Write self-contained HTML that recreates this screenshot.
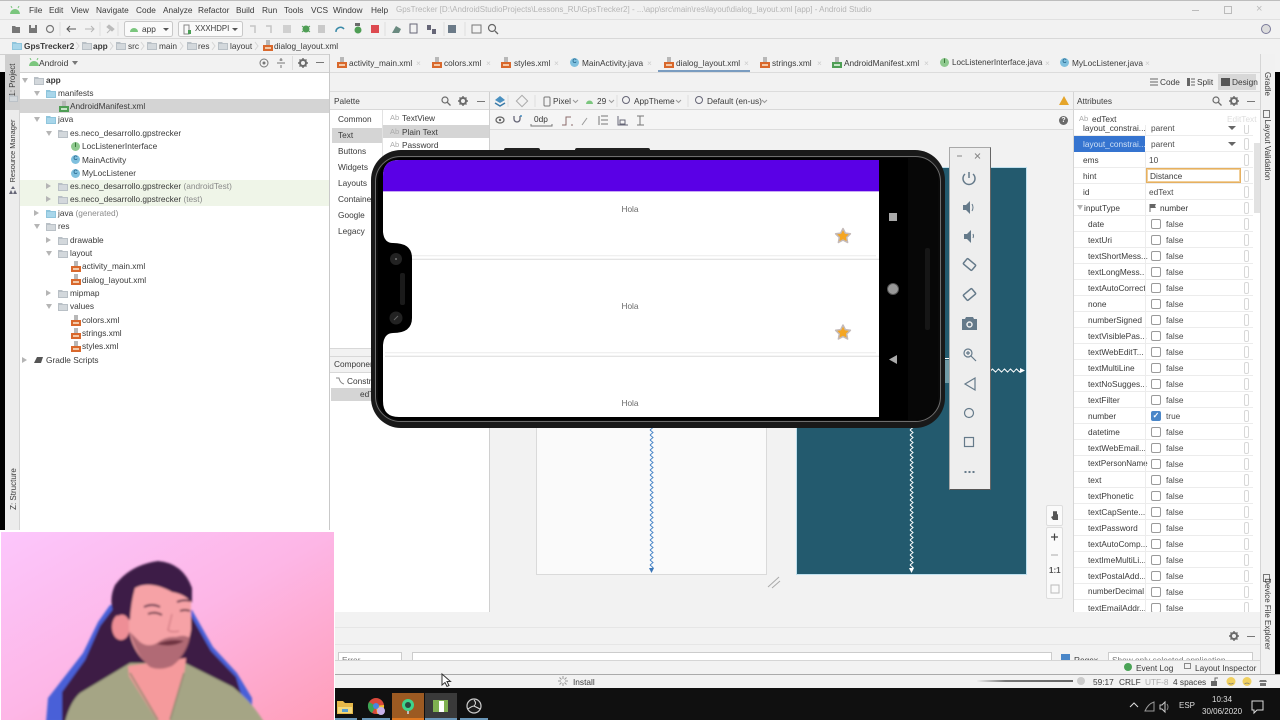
<!DOCTYPE html>
<html lang="en"><head><meta charset="utf-8"><title>GpsTrecker - Android Studio</title>
<style>
html,body{margin:0;padding:0;width:1280px;height:720px;overflow:hidden;background:#000}
#w{position:relative;width:1280px;height:720px;overflow:hidden;font:8.3px/12px "Liberation Sans",sans-serif;color:#3a3a3a;filter:blur(.3px)}
.a,.t,.s{position:absolute}
.t{white-space:nowrap}
.s{display:block;overflow:visible}
.g{color:#8a8a8a}
.c{width:9px;height:9px;border-radius:50%;background:#7fc0de;border:0 solid;position:absolute;color:#2a6a90;font:bold 6px/9px "Liberation Sans",sans-serif;text-align:center}
#at{position:absolute;left:1074px;top:125px;width:179px;height:487px;overflow:hidden}
#at div.in{margin-top:-5px}
.r{position:relative;height:15px;border-bottom:1px solid #ececec;line-height:16px;white-space:nowrap;color:#3a3a3a}
.r b{position:absolute;left:14px;top:0;font-weight:normal;width:62px;overflow:hidden}
.r b.m{left:9px}
.r u{position:absolute;left:77px;top:3px;width:8px;height:8px;border:1px solid #9a9a9a;border-radius:2px;background:#fff;text-decoration:none}
.r u.on{background:#4a86c8;border-color:#4a86c8;color:#fff;font:bold 8px/8px "Liberation Sans",sans-serif;text-align:center}
.r span{position:absolute;left:92px;top:0;color:#4a4a4a}
.r span.v{left:75px}
.r i{position:absolute;left:170px;top:2px;width:3px;height:10px;border:1px solid #d8d8d8;border-radius:2px}
.r em{position:absolute;left:71px;top:-1px;height:16px;width:1px;background:#ececec}
.arr{position:absolute;width:0;height:0;border-left:3px solid transparent;border-right:3px solid transparent;border-top:5px solid #b5b5b5}
.arr.rt{border-top:3px solid transparent;border-bottom:3px solid transparent;border-left:5px solid #b5b5b5;border-right:0}
</style></head><body><div id="w">

<svg width="0" height="0" style="position:absolute"><defs>
<symbol id="f" viewBox="0 0 10 9"><path d="M0 1h4l1 1h5v7H0z" fill="#b9c0c6"/><rect x="1" y="3" width="8" height="5" fill="#d3d8dc"/></symbol>
<symbol id="fb" viewBox="0 0 10 9"><path d="M0 1h4l1 1h5v7H0z" fill="#8fc5dc"/><rect x="1" y="3" width="8" height="5" fill="#a8d6ea"/></symbol>
<symbol id="x" viewBox="0 0 10 11"><path d="M3 0h4v5H3z" fill="#b8b8b8"/><rect x="0" y="5" width="10" height="6" fill="#d9682c"/><rect x="2" y="7" width="6" height="2" fill="#f3c9a8"/></symbol>
<symbol id="m" viewBox="0 0 10 11"><path d="M3 0h4v5H3z" fill="#b8b8b8"/><rect x="0" y="5" width="10" height="6" fill="#4f9e55"/><rect x="2" y="7" width="6" height="2" fill="#c7e4c8"/></symbol>
<symbol id="gear" viewBox="0 0 10 10"><circle cx="5" cy="5" r="3" fill="none" stroke="#6b6b6b" stroke-width="2"/><path d="M5 0v2M5 8v2M0 5h2M8 5h2M1.500 1.500l1.400 1.400M7.100 7.100l1.400 1.400M8.500 1.500L7.100 2.900M2.900 7.100L1.500 8.500" stroke="#6b6b6b" stroke-width="1.400"/></symbol>
<symbol id="mag" viewBox="0 0 10 10"><circle cx="4" cy="4" r="3" fill="none" stroke="#6b6b6b" stroke-width="1.200"/><path d="M6.300 6.300L9.500 9.500" stroke="#6b6b6b" stroke-width="1.300"/></symbol>
<symbol id="andr" viewBox="0 0 12 8"><path d="M1 8a5 5 0 0 1 10 0z" fill="#7bc67e"/><path d="M3 2L2 0M9 2l1-2" stroke="#7bc67e"/></symbol>
<pattern id="zw" width="6" height="5" patternUnits="userSpaceOnUse"><path d="M0 2.500L1.500 1 4.500 4 6 2.500" fill="none" stroke="#fff" stroke-width="1"/></pattern>
<pattern id="zb" width="5" height="5" patternUnits="userSpaceOnUse"><path d="M1 0L4 2.500 1 5" fill="none" stroke="#4a86c8" stroke-width="1"/></pattern>
<pattern id="zv" width="5" height="5" patternUnits="userSpaceOnUse"><path d="M1 0L4 2.500 1 5" fill="none" stroke="#fff" stroke-width="1"/></pattern>
</defs></svg>

<!-- base IDE chrome -->
<div class="a" style="left:0;top:0;width:1280px;height:19px;background:#f1f1f1"></div>
<div class="a" style="left:0;top:0;width:1280px;height:1px;background:#bdbdbd"></div>
<div class="a" style="left:0;top:19px;width:1280px;height:19px;background:#f2f2f2;border-top:1px solid #e0e0e0;box-sizing:border-box"></div>
<div class="a" style="left:0;top:38px;width:1280px;height:16px;background:#f2f2f2;border-top:1px solid #d8d8d8;box-sizing:border-box"></div>
<div class="a" style="left:0;top:54px;width:1275px;height:18px;background:#f2f2f2;border-top:1px solid #d0d0d0;box-sizing:border-box"></div>
<div class="a" style="left:0;top:72px;width:5px;height:460px;background:#000"></div>
<div class="a" style="left:1275px;top:72px;width:5px;height:616px;background:#000"></div>
<div class="a" style="left:1275px;top:54px;width:5px;height:18px;background:#f2f2f2"></div>

<!-- title -->
<svg class="s" style="left:9px;top:6px" width="12" height="8"><use href="#andr"/></svg>
<div class="t" style="left:29px;top:4px">File</div><div class="t" style="left:49px;top:4px">Edit</div><div class="t" style="left:71px;top:4px">View</div><div class="t" style="left:96px;top:4px">Navigate</div><div class="t" style="left:136px;top:4px">Code</div><div class="t" style="left:163px;top:4px">Analyze</div><div class="t" style="left:198px;top:4px">Refactor</div><div class="t" style="left:236px;top:4px">Build</div><div class="t" style="left:262px;top:4px">Run</div><div class="t" style="left:284px;top:4px">Tools</div><div class="t" style="left:311px;top:4px">VCS</div><div class="t" style="left:333px;top:4px">Window</div><div class="t" style="left:371px;top:4px">Help</div>
<div class="t" style="left:396px;top:4px;color:#b5b5b5;font-size:8px">GpsTrecker [D:\AndroidStudioProjects\Lessons_RU\GpsTrecker2] - ...\app\src\main\res\layout\dialog_layout.xml [app] - Android Studio</div>
<div class="a" style="left:1192px;top:10px;width:7px;height:1px;background:#bbb"></div>
<div class="a" style="left:1224px;top:6px;width:6px;height:6px;border:1px solid #bbb"></div>
<div class="t" style="left:1256px;top:3px;color:#bbb;font-size:11px">×</div>

<!-- toolbar -->
<svg class="s" style="left:0;top:19px" width="510" height="19">
<path d="M12 7h3l1 1h4v6h-8z" fill="#777"/>
<rect x="29" y="6" width="8" height="8" fill="#777"/><rect x="31" y="6" width="4" height="3" fill="#eee"/>
<circle cx="50" cy="10" r="3.500" fill="none" stroke="#777" stroke-width="1.200"/>
<path d="M67 10h9M70 7l-3 3 3 3" fill="none" stroke="#555"/><path d="M85 10h9M91 7l3 3-3 3" fill="none" stroke="#b5b5b5"/>
<path d="M107 14l5-5M109 6l5 4-2 2-5-4z" stroke="#bbb" fill="#bbb"/>
<path d="M60 3v14M100 3v14M118 3v14" stroke="#ddd"/>
<rect x="124.500" y="2.500" width="48" height="15" rx="2" fill="#fafafa" stroke="#c8c8c8"/>
<rect x="178.500" y="2.500" width="64" height="15" rx="2" fill="#fafafa" stroke="#c8c8c8"/>
<path d="M130 13a4 4 0 0 1 8 0z" fill="#7bc67e"/><path d="M163 9h6l-3 3z" fill="#555"/><path d="M232 9h6l-3 3z" fill="#555"/>
<rect x="184" y="6" width="5" height="9" fill="none" stroke="#888"/><rect x="188" y="11" width="3" height="4" fill="#4a9e55"/>
<path d="M250 7h5v7M266 7h5v7" fill="none" stroke="#c5c5c5" stroke-width="1.500"/><rect x="283" y="6" width="8" height="8" fill="#d0d0d0"/>
<circle cx="306" cy="10" r="3.500" fill="#4f9e55"/><path d="M302 7l8 6M310 7l-8 6" stroke="#4f9e55"/>
<rect x="318" y="6" width="7" height="8" fill="#c9c9c9"/>
<path d="M336 13a4.500 4.500 0 0 1 8-3" fill="none" stroke="#3a8aa8" stroke-width="1.500"/>
<circle cx="358" cy="11" r="3.500" fill="#4f9e55"/><rect x="355" y="4" width="5" height="3" fill="#6b6b6b"/>
<rect x="371" y="6" width="8" height="8" fill="#dd4a50"/>
<path d="M385 3v14M444 3v14M465 3v14" stroke="#ddd"/>
<path d="M392 14l4-7 5 3-2 4z" fill="#6a8a80"/><rect x="410" y="5" width="7" height="9" fill="none" stroke="#667"/><path d="M427 6h4v5h-4zM432 10h4v5h-4z" fill="#667"/>
<rect x="448" y="6" width="8" height="8" fill="#6b7a88"/>
<rect x="472" y="6" width="9" height="8" fill="none" stroke="#777"/><circle cx="492" cy="9" r="3.500" fill="none" stroke="#666" stroke-width="1.200"/><path d="M495 12l3 3" stroke="#666" stroke-width="1.300"/>
</svg>
<div class="t" style="left:142px;top:23px">app</div><div class="t" style="left:195px;top:23px;font-size:7.800px">XXXHDPI</div>
<svg class="s" style="left:1261px;top:24px" width="10" height="10"><circle cx="5" cy="5" r="4.500" fill="#ddd" stroke="#7a7a9a"/></svg>

<!-- breadcrumbs -->
<svg class="s" style="left:12px;top:41px" width="10" height="9"><use href="#fb"/></svg><div class="t" style="left:24px;top:40px;font-weight:bold">GpsTrecker2</div>
<svg class="s" style="left:82px;top:41px" width="10" height="9"><use href="#f"/></svg><div class="t" style="left:93px;top:40px;font-weight:bold">app</div>
<svg class="s" style="left:116px;top:41px" width="10" height="9"><use href="#f"/></svg><div class="t" style="left:128px;top:40px">src</div>
<svg class="s" style="left:147px;top:41px" width="10" height="9"><use href="#f"/></svg><div class="t" style="left:159px;top:40px">main</div>
<svg class="s" style="left:187px;top:41px" width="10" height="9"><use href="#f"/></svg><div class="t" style="left:198px;top:40px">res</div>
<svg class="s" style="left:218px;top:41px" width="10" height="9"><use href="#f"/></svg><div class="t" style="left:230px;top:40px">layout</div>
<svg class="s" style="left:263px;top:40px" width="10" height="11"><use href="#x"/></svg><div class="t" style="left:274px;top:40px">dialog_layout.xml</div>
<svg class="s" style="left:0;top:40px" width="270" height="12"><path d="M76 2l3 4-3 4M110 2l3 4-3 4M141 2l3 4-3 4M180 2l3 4-3 4M212 2l3 4-3 4M255 2l3 4-3 4" fill="none" stroke="#d5d5d5"/></svg>

<!-- left project panel -->
<div class="a" style="left:5px;top:54px;width:15px;height:478px;background:#ececec;border-right:1px solid #d5d5d5;box-sizing:border-box"></div>
<div class="a" style="left:5px;top:54px;width:15px;height:56px;background:#cfcfcf"></div>
<div class="t" style="left:-12px;top:74px;transform:rotate(-90deg);width:50px;text-align:center;font-size:7.800px">1: Project</div>
<svg class="s" style="left:9px;top:94px" width="9" height="8"><use href="#f"/></svg>
<div class="t" style="left:-22px;top:145px;transform:rotate(-90deg);width:70px;text-align:center;font-size:7.400px">Resource Manager</div>
<svg class="s" style="left:9px;top:186px" width="8" height="8"><path d="M4 0l2 3H2zM0 8l2-4 2 4zM4 8l2-4 2 4z" fill="#667"/></svg>
<div class="t" style="left:-9px;top:483px;transform:rotate(-90deg);width:46px;text-align:center;font-size:8px">Z: Structure</div>
<div class="a" style="left:20px;top:72px;width:310px;height:460px;background:#fff"></div>
<svg class="s" style="left:28px;top:58px" width="12" height="8"><use href="#andr"/></svg>
<div class="t" style="left:39px;top:57px;font-size:8.500px">Android</div>
<div class="a" style="left:72px;top:61px;width:0;height:0;border:3px solid transparent;border-top:4px solid #777"></div>
<svg class="s" style="left:259px;top:58px" width="10" height="10"><circle cx="5" cy="5" r="4" fill="none" stroke="#777"/><circle cx="5" cy="5" r="1.500" fill="#777"/></svg>
<svg class="s" style="left:276px;top:58px" width="10" height="10"><path d="M1 5h8M5 0v3M3.500 2h3M5 10V7" stroke="#777"/></svg>
<svg class="s" style="left:298px;top:58px" width="10" height="10"><use href="#gear"/></svg>
<div class="a" style="left:316px;top:62px;width:8px;height:1px;background:#777"></div>
<div class="a" style="left:292px;top:56px;width:1px;height:14px;background:#ddd"></div>
<div class="a" style="left:20px;top:72px;width:310px;height:1px;background:#d0d0d0"></div>
<div class="a" style="left:329px;top:54px;width:1px;height:478px;background:#c9c9c9"></div>

<div class="a" style="left:20px;top:99px;width:309px;height:14px;background:#d4d4d4"></div>
<div class="a" style="left:20px;top:180px;width:309px;height:26px;background:#eff5e8"></div>

<i class="arr" style="left:22px;top:78px"></i><svg class="s" style="left:34px;top:76px" width="10" height="9"><use href="#f"/></svg><div class="t" style="left:46px;top:74px;font-weight:bold">app</div>
<i class="arr" style="left:34px;top:91px"></i><svg class="s" style="left:46px;top:89px" width="10" height="9"><use href="#fb"/></svg><div class="t" style="left:58px;top:87px">manifests</div>
<svg class="s" style="left:59px;top:101px" width="10" height="11"><use href="#m"/></svg><div class="t" style="left:70px;top:100px">AndroidManifest.xml</div>
<i class="arr" style="left:34px;top:117px"></i><svg class="s" style="left:46px;top:115px" width="10" height="9"><use href="#fb"/></svg><div class="t" style="left:58px;top:113px">java</div>
<i class="arr" style="left:46px;top:131px"></i><svg class="s" style="left:58px;top:129px" width="10" height="9"><use href="#f"/></svg><div class="t" style="left:70px;top:127px">es.neco_desarrollo.gpstrecker</div>
<div class="c" style="left:71px;top:142px;background:#8fc98f;color:#2c6a2c">I</div><div class="t" style="left:82px;top:140px">LocListenerInterface</div>
<div class="c" style="left:71px;top:155px">C</div><div class="t" style="left:82px;top:154px">MainActivity</div>
<div class="c" style="left:71px;top:169px">C</div><div class="t" style="left:82px;top:167px">MyLocListener</div>
<i class="arr rt" style="left:46px;top:183px"></i><svg class="s" style="left:58px;top:182px" width="10" height="9"><use href="#f"/></svg><div class="t" style="left:70px;top:180px">es.neco_desarrollo.gpstrecker <span class="g">(androidTest)</span></div>
<i class="arr rt" style="left:46px;top:196px"></i><svg class="s" style="left:58px;top:195px" width="10" height="9"><use href="#f"/></svg><div class="t" style="left:70px;top:193px">es.neco_desarrollo.gpstrecker <span class="g">(test)</span></div>
<i class="arr rt" style="left:34px;top:210px"></i><svg class="s" style="left:46px;top:209px" width="10" height="9"><use href="#fb"/></svg><div class="t" style="left:58px;top:207px">java <span class="g">(generated)</span></div>
<i class="arr" style="left:34px;top:224px"></i><svg class="s" style="left:46px;top:222px" width="10" height="9"><use href="#f"/></svg><div class="t" style="left:58px;top:220px">res</div>
<i class="arr rt" style="left:46px;top:237px"></i><svg class="s" style="left:58px;top:236px" width="10" height="9"><use href="#f"/></svg><div class="t" style="left:70px;top:234px">drawable</div>
<i class="arr" style="left:46px;top:251px"></i><svg class="s" style="left:58px;top:249px" width="10" height="9"><use href="#f"/></svg><div class="t" style="left:70px;top:247px">layout</div>
<svg class="s" style="left:71px;top:261px" width="10" height="11"><use href="#x"/></svg><div class="t" style="left:82px;top:260px">activity_main.xml</div>
<svg class="s" style="left:71px;top:274px" width="10" height="11"><use href="#x"/></svg><div class="t" style="left:82px;top:274px">dialog_layout.xml</div>
<i class="arr rt" style="left:46px;top:290px"></i><svg class="s" style="left:58px;top:289px" width="10" height="9"><use href="#f"/></svg><div class="t" style="left:70px;top:287px">mipmap</div>
<i class="arr" style="left:46px;top:304px"></i><svg class="s" style="left:58px;top:302px" width="10" height="9"><use href="#f"/></svg><div class="t" style="left:70px;top:300px">values</div>
<svg class="s" style="left:71px;top:315px" width="10" height="11"><use href="#x"/></svg><div class="t" style="left:82px;top:314px">colors.xml</div>
<svg class="s" style="left:71px;top:328px" width="10" height="11"><use href="#x"/></svg><div class="t" style="left:82px;top:327px">strings.xml</div>
<svg class="s" style="left:71px;top:341px" width="10" height="11"><use href="#x"/></svg><div class="t" style="left:82px;top:340px">styles.xml</div>
<i class="arr rt" style="left:22px;top:357px"></i><svg class="s" style="left:33px;top:355px" width="11" height="9"><path d="M1 8l3-6h6l-2 6z" fill="#555"/></svg><div class="t" style="left:46px;top:354px">Gradle Scripts</div>

<!-- Editor tabs -->
<div class="a" style="left:330px;top:54px;width:930px;height:18px;background:#f2f2f2"></div>
<svg class="s" style="left:337px;top:57px" width="10" height="11"><use href="#x"/></svg><div class="t" style="left:349px;top:57px">activity_main.xml</div><div class="t g" style="left:416px;top:57px;color:#ccc">×</div>
<svg class="s" style="left:432px;top:57px" width="10" height="11"><use href="#x"/></svg><div class="t" style="left:444px;top:57px">colors.xml</div><div class="t" style="left:486px;top:57px;color:#ccc">×</div>
<svg class="s" style="left:501px;top:57px" width="10" height="11"><use href="#x"/></svg><div class="t" style="left:514px;top:57px">styles.xml</div><div class="t" style="left:554px;top:57px;color:#ccc">×</div>
<div class="c" style="left:570px;top:58px">C</div><div class="t" style="left:582px;top:57px">MainActivity.java</div><div class="t" style="left:647px;top:57px;color:#ccc">×</div>
<svg class="s" style="left:664px;top:57px" width="10" height="11"><use href="#x"/></svg><div class="t" style="left:676px;top:57px">dialog_layout.xml</div><div class="t" style="left:744px;top:57px;color:#ccc">×</div>
<div class="a" style="left:658px;top:70px;width:92px;height:2px;background:#7a9cc0"></div>
<svg class="s" style="left:760px;top:57px" width="10" height="11"><use href="#x"/></svg><div class="t" style="left:772px;top:57px">strings.xml</div><div class="t" style="left:817px;top:57px;color:#ccc">×</div>
<svg class="s" style="left:832px;top:57px" width="10" height="11"><use href="#m"/></svg><div class="t" style="left:844px;top:57px">AndroidManifest.xml</div><div class="t" style="left:924px;top:57px;color:#ccc">×</div>
<div class="c" style="left:940px;top:58px;background:#8fc98f;color:#2c6a2c">I</div><div class="t" style="left:952px;top:57px;font-size:8.100px">LocListenerInterface.java</div><div class="t" style="left:1045px;top:57px;color:#ccc">×</div>
<div class="c" style="left:1060px;top:58px">C</div><div class="t" style="left:1072px;top:57px">MyLocListener.java</div><div class="t" style="left:1145px;top:57px;color:#ccc">×</div>

<!-- right strip -->
<div class="a" style="left:1260px;top:54px;width:15px;height:634px;background:#f1f1f1;border-left:1px solid #d5d5d5;box-sizing:border-box"></div>
<div class="t" style="left:1247px;top:78px;transform:rotate(90deg);width:40px;text-align:center;font-size:8px">Gradle</div>
<div class="t" style="left:1232px;top:144px;transform:rotate(90deg);width:70px;text-align:center;font-size:8px">Layout Validation</div>
<div class="a" style="left:1263px;top:110px;width:7px;height:8px;border:1px solid #777;box-sizing:border-box"></div>
<div class="a" style="left:1263px;top:574px;width:7px;height:8px;border:1px solid #777;box-sizing:border-box"></div>
<div class="t" style="left:1231px;top:608px;transform:rotate(90deg);width:72px;text-align:center;font-size:8px">Device File Explorer</div>

<!-- mode bar -->
<div class="a" style="left:330px;top:72px;width:930px;height:20px;background:#f2f2f2;border-top:1px solid #dcdcdc;border-bottom:1px solid #dcdcdc;box-sizing:border-box"></div>
<div class="a" style="left:1218px;top:74px;width:38px;height:16px;background:#d8d8d8"></div>
<svg class="s" style="left:1149px;top:78px" width="110" height="9"><path d="M1 1h8M1 4h8M1 7h8" stroke="#666"/><path d="M38 0h3v8h-3z" fill="#666"/><path d="M42 1h4M42 4h4M42 7h4" stroke="#666"/><rect x="72" y="0" width="9" height="8" fill="#555"/></svg>
<div class="t" style="left:1160px;top:76px">Code</div><div class="t" style="left:1197px;top:76px">Split</div><div class="t" style="left:1232px;top:76px">Design</div>

<!-- palette -->
<div class="a" style="left:330px;top:92px;width:160px;height:18px;background:#f2f2f2;border-bottom:1px solid #d8d8d8;box-sizing:border-box"></div>
<div class="t" style="left:334px;top:95px">Palette</div>
<svg class="s" style="left:441px;top:96px" width="10" height="10"><use href="#mag"/></svg>
<svg class="s" style="left:458px;top:96px" width="10" height="10"><use href="#gear"/></svg>
<div class="a" style="left:477px;top:101px;width:8px;height:1px;background:#777"></div>
<div class="a" style="left:330px;top:110px;width:159px;height:238px;background:#fff"></div>
<div class="a" style="left:382px;top:110px;width:1px;height:238px;background:#e2e2e2"></div>
<div class="a" style="left:332px;top:128px;width:50px;height:15px;background:#d5d5d5"></div>
<div class="a" style="left:383px;top:125px;width:106px;height:13px;background:#d5d5d5"></div>
<div class="t" style="left:338px;top:113px">Common</div><div class="t" style="left:338px;top:129px">Text</div><div class="t" style="left:338px;top:145px">Buttons</div><div class="t" style="left:338px;top:161px">Widgets</div><div class="t" style="left:338px;top:177px">Layouts</div><div class="t" style="left:338px;top:193px">Container</div><div class="t" style="left:338px;top:209px">Google</div><div class="t" style="left:338px;top:225px">Legacy</div>
<div class="t" style="left:390px;top:112px;color:#aaa;font-size:7.500px">Ab</div><div class="t" style="left:402px;top:112px">TextView</div>
<div class="t" style="left:390px;top:126px;color:#aaa;font-size:7.500px">Ab</div><div class="t" style="left:402px;top:126px">Plain Text</div>
<div class="t" style="left:390px;top:139px;color:#aaa;font-size:7.500px">Ab</div><div class="t" style="left:402px;top:139px">Password</div>
<div class="a" style="left:330px;top:348px;width:159px;height:8px;background:#f2f2f2;border-top:1px solid #d8d8d8;box-sizing:border-box"></div>
<div class="a" style="left:330px;top:356px;width:159px;height:17px;background:#f2f2f2;border-top:1px solid #d8d8d8;border-bottom:1px solid #d8d8d8;box-sizing:border-box"></div>
<div class="t" style="left:334px;top:358px">Component Tree</div>
<div class="a" style="left:330px;top:373px;width:159px;height:239px;background:#fff"></div>
<div class="a" style="left:331px;top:388px;width:158px;height:13px;background:#d5d5d5"></div>
<div class="t" style="left:347px;top:375px">ConstraintLayout</div><div class="t" style="left:360px;top:388px">edText</div>
<svg class="s" style="left:336px;top:377px" width="8" height="8"><path d="M0 1h3q1 5 5 6" fill="none" stroke="#888"/></svg>

<!-- designer toolbars -->
<div class="a" style="left:490px;top:92px;width:583px;height:18px;background:#f2f2f2;border-bottom:1px solid #d8d8d8;box-sizing:border-box"></div>
<div class="a" style="left:490px;top:110px;width:583px;height:20px;background:#f5f5f5;border-bottom:1px solid #dcdcdc;box-sizing:border-box"></div>
<div class="a" style="left:489px;top:92px;width:1px;height:520px;background:#d0d0d0"></div>
<svg class="s" style="left:490px;top:92px" width="580" height="38">
<path d="M5 8l5-4 5 4-5 3z" fill="#4a90c0"/><path d="M5 11l5 3 5-3" stroke="#3a7aa8" fill="none" stroke-width="1.500"/>
<rect x="28" y="5" width="8" height="8" transform="rotate(45 32 9)" fill="none" stroke="#aaa"/>
<rect x="54" y="5" width="6" height="9" rx="1" fill="none" stroke="#777"/>
<path d="M96 12a3.500 3.500 0 0 1 7 0z" fill="#7bc67e"/>
<path d="M18 3v12M45 3v12M127 3v12M198 3v12" stroke="#ddd"/>
<path d="M83 8l2.500 2.500L88 8M119 8l2.500 2.500L124 8M186 8l2.500 2.500L191 8M272 8l2.500 2.500L277 8" fill="none" stroke="#999"/>
<ellipse cx="10" cy="28" rx="4" ry="3" fill="none" stroke="#666" stroke-width="1.300"/><circle cx="10" cy="28" r="1.200" fill="#666"/>
<path d="M24 24v3a3 3 0 0 0 6 0v-3" fill="none" stroke="#667" stroke-width="1.300"/><circle cx="31" cy="24" r="1" fill="#4a90c0"/>
<path d="M41 32v2h21v-2" fill="none" stroke="#777"/><path d="M72 33h4v-8h5M81 33h2" fill="none" stroke="#8a6a6a"/><path d="M92 33l5-7" stroke="#999"/><path d="M111 24h7M111 28h7M111 32h7M109 24v9" stroke="#777" fill="none"/><path d="M128 24v9h10M130 28h5v4h-5z" fill="none" stroke="#667"/><path d="M147 24h7M150 24v9M147 33h7" stroke="#777" fill="none"/>
</svg>
<div class="t" style="left:534px;top:113px;color:#333">0dp</div>
<div class="t" style="left:553px;top:95px">Pixel</div><div class="t" style="left:597px;top:95px">29</div><div class="t" style="left:634px;top:95px">AppTheme</div><div class="t" style="left:707px;top:95px">Default (en-us)</div>
<div class="a" style="left:695px;top:96px;width:8px;height:8px;border:1px solid #667;border-radius:50%;box-sizing:border-box"></div>
<div class="a" style="left:622px;top:96px;width:8px;height:8px;border:1px solid #667;border-radius:50%;box-sizing:border-box"></div>
<svg class="s" style="left:1059px;top:96px" width="10" height="9"><path d="M5 0l5 9H0z" fill="#e5a52a"/></svg>
<div class="a" style="left:1059px;top:116px;width:9px;height:9px;background:#6b6b6b;border-radius:50%;color:#fff;font:bold 7px/9px 'Liberation Sans',sans-serif;text-align:center">?</div>

<!-- canvas -->
<div class="a" style="left:490px;top:130px;width:583px;height:482px;background:#f2f2f2"></div>
<div class="a" style="left:537px;top:168px;width:229px;height:406px;background:#fafafa;box-shadow:0 0 0 1px #dadada"></div>
<div class="a" style="left:797px;top:168px;width:229px;height:406px;background:#235a6e;box-shadow:0 0 0 1px #bfe0ee"></div>
<svg class="s" style="left:649px;top:420px" width="5" height="154"><rect width="5" height="150" fill="url(#zb)"/><path d="M0 148h5l-2.500 5z" fill="#3a76b8"/></svg>
<svg class="s" style="left:909px;top:420px" width="5" height="154"><rect width="5" height="150" fill="url(#zv)"/><path d="M0 148h5l-2.500 5z" fill="#fff"/></svg>
<svg class="s" style="left:991px;top:368px" width="35" height="5"><rect width="30" height="5" fill="url(#zw)"/><path d="M29 0l5 2.500-5 2.500z" fill="#fff"/></svg>
<div class="a" style="left:945px;top:358px;width:4px;height:1px;background:#fff"></div>
<div class="a" style="left:945px;top:360px;width:4px;height:23px;background:#6f9aa6"></div>
<svg class="s" style="left:767px;top:576px" width="14" height="14"><path d="M1 11L12 1M5 12L13 5" stroke="#aaa"/></svg>
<div class="a" style="left:1046px;top:505px;width:17px;height:21px;background:#fafafa;border:1px solid #ddd;border-radius:2px;box-sizing:border-box"></div>
<div class="a" style="left:1046px;top:527px;width:17px;height:72px;background:#fafafa;border:1px solid #ddd;border-radius:2px;box-sizing:border-box"></div>
<svg class="s" style="left:1046px;top:505px" width="17" height="94"><path d="M5 12l2 3h5v-5a1 1 0 0 0-1-1V7a1 1 0 0 0-2 0 1 1 0 0 0-2 0v4z" fill="#555"/><path d="M5 32h7M8.500 28.500v7" stroke="#444" stroke-width="1.200"/><path d="M5 50h7" stroke="#aaa"/><rect x="5" y="80" width="8" height="8" fill="none" stroke="#bbb"/></svg>
<div class="t" style="left:1049px;top:565px;font-size:8px;font-weight:bold;color:#555">1:1</div>

<!-- attributes -->
<div class="a" style="left:1073px;top:92px;width:187px;height:520px;background:#fff;border-left:1px solid #d5d5d5;box-sizing:border-box"></div>
<div class="a" style="left:1074px;top:92px;width:186px;height:18px;background:#f2f2f2;border-bottom:1px solid #d8d8d8;box-sizing:border-box"></div>
<div class="t" style="left:1077px;top:95px">Attributes</div>
<svg class="s" style="left:1212px;top:96px" width="10" height="10"><use href="#mag"/></svg>
<svg class="s" style="left:1229px;top:96px" width="10" height="10"><use href="#gear"/></svg>
<div class="a" style="left:1247px;top:101px;width:8px;height:1px;background:#777"></div>
<div class="t" style="left:1079px;top:113px;color:#aaa;font-size:7.500px">Ab</div><div class="t" style="left:1092px;top:113px">edText</div><div class="t" style="left:1227px;top:113px;color:#ddd">EditText</div>
<div id="at"><div class="in">
<div class="r"><b class="m">layout_constrai...</b><em></em><span class="v" style="left:77px">parent</span><i></i></div>
<div class="r"><b class="m" style="left:0;padding-left:9px;width:62px;height:16px;background:#3574d0;color:#cfe0f5">layout_constrai...</b><span class="v" style="left:77px">parent</span><i></i></div>
<div class="r"><b class="m">ems</b><em></em><span class="v">10</span><i></i></div>
<div class="r"><b class="m">hint</b><em></em><i></i></div>
<div class="r"><b class="m">id</b><em></em><span class="v">edText</span><i></i></div>
<div class="r"><b class="m" style="left:10px">inputType</b><em></em><span class="v" style="left:86px;color:#333">number</span><i></i></div>
<div class="r"><b>date</b><em></em><u></u><span>false</span><i></i></div>
<div class="r"><b>textUri</b><em></em><u></u><span>false</span><i></i></div>
<div class="r"><b>textShortMess...</b><em></em><u></u><span>false</span><i></i></div>
<div class="r"><b>textLongMess...</b><em></em><u></u><span>false</span><i></i></div>
<div class="r"><b>textAutoCorrect</b><em></em><u></u><span>false</span><i></i></div>
<div class="r"><b>none</b><em></em><u></u><span>false</span><i></i></div>
<div class="r"><b>numberSigned</b><em></em><u></u><span>false</span><i></i></div>
<div class="r"><b>textVisiblePas...</b><em></em><u></u><span>false</span><i></i></div>
<div class="r"><b>textWebEditT...</b><em></em><u></u><span>false</span><i></i></div>
<div class="r"><b>textMultiLine</b><em></em><u></u><span>false</span><i></i></div>
<div class="r"><b>textNoSugges...</b><em></em><u></u><span>false</span><i></i></div>
<div class="r"><b>textFilter</b><em></em><u></u><span>false</span><i></i></div>
<div class="r"><b>number</b><em></em><u class="on">✓</u><span>true</span><i></i></div>
<div class="r"><b>datetime</b><em></em><u></u><span>false</span><i></i></div>
<div class="r"><b>textWebEmail...</b><em></em><u></u><span>false</span><i></i></div>
<div class="r"><b style="font-size:8px">textPersonName</b><em></em><u></u><span>false</span><i></i></div>
<div class="r"><b>text</b><em></em><u></u><span>false</span><i></i></div>
<div class="r"><b>textPhonetic</b><em></em><u></u><span>false</span><i></i></div>
<div class="r"><b>textCapSente...</b><em></em><u></u><span>false</span><i></i></div>
<div class="r"><b>textPassword</b><em></em><u></u><span>false</span><i></i></div>
<div class="r"><b>textAutoComp...</b><em></em><u></u><span>false</span><i></i></div>
<div class="r"><b>textImeMultiLi...</b><em></em><u></u><span>false</span><i></i></div>
<div class="r"><b>textPostalAdd...</b><em></em><u></u><span>false</span><i></i></div>
<div class="r"><b style="font-size:8px">numberDecimal</b><em></em><u></u><span>false</span><i></i></div>
<div class="r"><b>textEmailAddr...</b><em></em><u></u><span>false</span><i></i></div>
</div></div>
<div class="a" style="left:1228px;top:126px;width:0;height:0;border:4px solid transparent;border-top:4px solid #666"></div>
<div class="a" style="left:1228px;top:142px;width:0;height:0;border:4px solid transparent;border-top:4px solid #666"></div>
<div class="a" style="left:1146px;top:168px;width:95px;height:15px;border:1px solid #e6b060;box-shadow:inset 0 0 0 1px #f1cf99;box-sizing:border-box;background:#fff;padding-left:3px;line-height:14px">Distance</div>
<svg class="s" style="left:1148px;top:203px" width="10" height="9"><path d="M2 1v8" stroke="#666"/><path d="M2 1h6l-1 2 1 2H2z" fill="#666"/></svg>
<i class="arr" style="left:1077px;top:205px"></i>
<div class="a" style="left:1254px;top:143px;width:6px;height:70px;background:#e2e2e2"></div>

<!-- bottom panels -->
<div class="a" style="left:334px;top:612px;width:926px;height:62px;background:#f2f2f2"></div>
<div class="a" style="left:334px;top:627px;width:926px;height:1px;background:#e6e6e6"></div>
<div class="a" style="left:334px;top:644px;width:926px;height:1px;background:#e6e6e6"></div>
<svg class="s" style="left:1229px;top:631px" width="10" height="10"><use href="#gear"/></svg>
<div class="a" style="left:1247px;top:636px;width:8px;height:1px;background:#777"></div>
<div class="a" style="left:338px;top:652px;width:64px;height:8px;background:#fff;border:1px solid #ccc;border-bottom:0;box-sizing:border-box"></div>
<div class="a" style="left:412px;top:652px;width:640px;height:8px;background:#fff;border:1px solid #ccc;border-bottom:0;box-sizing:border-box"></div>
<div class="a" style="left:1061px;top:654px;width:9px;height:6px;background:#4a86c8"></div>
<div class="a" style="left:1108px;top:652px;width:145px;height:8px;background:#fff;border:1px solid #ccc;border-bottom:0;box-sizing:border-box"></div>
<div class="a" style="left:334px;top:651px;width:926px;height:9px;overflow:hidden"><div class="t" style="left:8px;top:3px;color:#777">Error</div><div class="t" style="left:740px;top:3px">Regex</div><div class="t" style="left:778px;top:3px;color:#777">Show only selected application</div></div>
<div class="a" style="left:334px;top:660px;width:926px;height:14px;background:#f2f2f2;border-top:1px solid #d5d5d5;box-sizing:border-box"></div>
<div class="a" style="left:1124px;top:663px;width:8px;height:8px;background:#4aa356;border-radius:50%"></div>
<div class="t" style="left:1136px;top:662px">Event Log</div>
<div class="t" style="left:1195px;top:662px">Layout Inspector</div>
<div class="a" style="left:1184px;top:663px;width:7px;height:6px;border:1px solid #888;box-sizing:border-box"></div>
<div class="a" style="left:334px;top:674px;width:946px;height:14px;background:#f2f2f2;border-top:1px solid #aaa;box-sizing:border-box"></div>
<svg class="s" style="left:558px;top:676px" width="10" height="10"><path d="M5 0v3M5 7v3M0 5h3M7 5h3M1.500 1.500l2 2M6.500 6.500l2 2M8.500 1.500l-2 2M3.500 6.500l-2 2" stroke="#999"/></svg>
<div class="t" style="left:573px;top:676px">Install</div>
<div class="a" style="left:977px;top:680px;width:96px;height:2px;background:linear-gradient(90deg,#eee,#777 30%,#666)"></div>
<div class="a" style="left:1077px;top:677px;width:8px;height:8px;background:#ccc;border-radius:50%"></div>
<div class="t" style="left:1093px;top:676px">59:17</div><div class="t" style="left:1119px;top:676px">CRLF</div><div class="t" style="left:1145px;top:676px;color:#aaa">UTF-8</div><div class="t" style="left:1173px;top:676px">4 spaces</div>
<svg class="s" style="left:1210px;top:676px" width="60" height="11"><rect x="1" y="5" width="6" height="5" fill="#666"/><path d="M5 5V2h3" fill="none" stroke="#666"/><circle cx="21" cy="5.500" r="4.500" fill="#f0d060"/><circle cx="37" cy="5.500" r="4.500" fill="#f0d060"/><path d="M18.500 7q2.500 2 5 0M34.500 8q2.500-2 5 0" stroke="#777" fill="none" stroke-width=".8"/><path d="M50 4h6l1 2h-8zM50 7h6v3h-6z" fill="#777"/></svg>
<svg class="s" style="left:441px;top:673px" width="10" height="15"><path d="M1 1v11l3-2.500 2 4 2-1-2-4h3.500z" fill="#fff" stroke="#333"/></svg>

<!-- taskbar -->
<div class="a" style="left:334px;top:688px;width:946px;height:32px;background:#101010"></div>
<div class="a" style="left:392px;top:693px;width:32px;height:27px;background:#9c5a22"></div>
<div class="a" style="left:425px;top:693px;width:32px;height:27px;background:#3a3a3a"></div>
<div class="a" style="left:392px;top:718px;width:32px;height:2px;background:#e07820"></div>
<div class="a" style="left:334px;top:718px;width:23px;height:2px;background:#6a96b8"></div>
<div class="a" style="left:362px;top:718px;width:28px;height:2px;background:#6a96b8"></div>
<div class="a" style="left:425px;top:718px;width:32px;height:2px;background:#6a96b8"></div>
<div class="a" style="left:460px;top:718px;width:28px;height:2px;background:#6a96b8"></div>
<svg class="s" style="left:334px;top:688px" width="160" height="32">
<path d="M3 13h6l2 2h8v11H3z" fill="#e6b84a"/><rect x="4" y="19" width="14" height="6" fill="#f4d97c"/><rect x="8" y="21" width="6" height="3" fill="#5aa0d0"/>
<circle cx="42" cy="18" r="8" fill="#d9483b"/><path d="M42 18L35 14a8 8 0 0 0 3 11z" fill="#3aa655"/><path d="M42 18l1 8a8 8 0 0 0 7-9z" fill="#f0c030"/><circle cx="42" cy="18" r="3" fill="#4a86e0"/><circle cx="47" cy="23" r="4" fill="#c8b0e8"/>
<circle cx="74" cy="17" r="6" fill="#3dd68c"/><circle cx="74" cy="17" r="3" fill="#2a4a40"/><path d="M74 23v3" stroke="#cde" stroke-width="1.500"/>
<rect x="99" y="12" width="15" height="12" fill="#7fb050"/><rect x="105" y="13" width="5" height="11" fill="#fff"/>
<circle cx="140" cy="18" r="7" fill="#1c1c1c" stroke="#ccc" stroke-width="1.200"/><path d="M140 12q3 3 0 6M134 21q4-3 6-3M146 21q-4-2-6-3" stroke="#ddd" fill="none"/>
</svg>
<svg class="s" style="left:1128px;top:698px" width="135" height="18"><path d="M2 9l4-4 4 4" fill="none" stroke="#ddd"/><path d="M17 13q3-7 9-9v9z" fill="none" stroke="#999"/><path d="M32 7h2l3-3v10l-3-3h-2z" fill="none" stroke="#ccc"/><path d="M39 6q2 3 0 6" fill="none" stroke="#888"/><path d="M124 3h11v9h-6l-3 3v-3h-2z" fill="none" stroke="#ddd"/></svg>
<div class="t" style="left:1179px;top:700px;color:#ddd;font-size:8px">ESP</div>
<div class="t" style="left:1212px;top:694px;color:#ddd;font-size:8px">10:34</div>
<div class="t" style="left:1202px;top:706px;color:#ddd;font-size:8px">30/06/2020</div>

<!-- phone -->
<svg class="s" style="left:0;top:0" width="1280" height="720">
<rect x="504" y="148" width="36" height="5" rx="2" fill="#222"/><rect x="575" y="148" width="75" height="5" rx="2" fill="#222"/>
<rect x="371" y="150" width="574" height="278" rx="30" fill="#191919"/>
<rect x="375.500" y="156.500" width="565" height="265" rx="25" fill="#0a0a0a" stroke="#6e6e6e" stroke-width="1"/>
<rect x="378" y="158" width="560" height="262" rx="23" fill="#000"/>
<path d="M908 158H915Q938 158 938 181V397Q938 420 915 420H908z" fill="#070707"/>
<path d="M399 160H879V417H399Q383 417 383 401V345Q384 333 393 333Q412 333 412 318V258Q412 243 393 243Q384 243 383 232V176Q383 160 399 160Z" fill="#fff"/>
<path d="M399 160H879V191H383V176Q383 160 399 160Z" fill="#5a00e6"/>
<path d="M383 191.500H879" stroke="#c8a8f5" stroke-width="1"/>
<path d="M412 255.700H876" stroke="#ececec"/><path d="M412 259.300H879" stroke="#dcdcdc"/>
<path d="M385 352.700H876" stroke="#ececec"/><path d="M385 356.300H879" stroke="#dcdcdc"/>
<circle cx="396" cy="259" r="6" fill="#222"/><circle cx="396" cy="259" r="1" fill="#777"/>
<circle cx="396" cy="318" r="6.500" fill="#222"/><path d="M394 320l4-4" stroke="#666"/>
<rect x="400" y="273" width="5" height="32" rx="2" fill="#1a1a1a"/>
<rect x="889" y="213" width="8" height="8" fill="#aaa"/>
<circle cx="893" cy="289" r="5.500" fill="#999" stroke="#555" stroke-width="1"/>
<path d="M897 355v9l-8-4.500z" fill="#aaa"/>
<rect x="925" y="248" width="5" height="82" rx="2" fill="#161616"/>
<g fill="#f5a623" stroke="#c4bab8" stroke-width="1.500" stroke-linejoin="round">
<path d="M843 228.500l2.300 4.600 5.100.7-3.700 3.600.9 5.100-4.600-2.400-4.600 2.400.9-5.100-3.700-3.600 5.100-.7z"/>
<path d="M843 325l2.300 4.600 5.100.7-3.700 3.600.9 5.100-4.600-2.400-4.600 2.400.9-5.100-3.700-3.600 5.100-.7z"/>
</g>
</svg>
<div class="t" style="left:610px;top:203px;width:40px;text-align:center;color:#6a6a6a">Hola</div>
<div class="t" style="left:610px;top:300px;width:40px;text-align:center;color:#6a6a6a">Hola</div>
<div class="t" style="left:610px;top:397px;width:40px;text-align:center;color:#6a6a6a">Hola</div>

<!-- emulator toolbar -->
<div class="a" style="left:949px;top:147px;width:42px;height:343px;background:#eeeeee;border:1px solid #a9a9a9;border-right:1px solid #666;border-bottom:1px solid #555;box-sizing:border-box"></div>
<svg class="s" style="left:949px;top:147px" width="42" height="343" fill="none" stroke="#657a8a" stroke-width="1.500">
<path d="M8 9h5M26 6.500l5 5M31 6.500l-5 5" stroke="#888" stroke-width="1"/>
<path d="M16 27a6 6 0 1 0 8 0M20 25v6"/>
<path d="M14 58h3l4-4v13l-4-4h-3z" fill="#657a8a" stroke="none"/><path d="M23 57q2 3.500 0 7" stroke-width="1"/>
<path d="M15 87h3l4-4v13l-4-4h-3z" fill="#657a8a" stroke="none"/><path d="M24 87q1 2 0 4" stroke-width="1"/>
<rect x="15" y="114" width="11" height="7" rx="1" transform="rotate(40 20.500 117.500)"/>
<rect x="15" y="144" width="11" height="7" rx="1" transform="rotate(-40 20.500 147.500)"/>
<path d="M13 172h3l1-2h7l1 2h3v11H13z" fill="#657a8a" stroke="none"/><circle cx="20.500" cy="177.500" r="2.500" stroke="#eee"/>
<circle cx="19" cy="206" r="4" stroke-width="1.200"/><path d="M22 209l5 5M19 204v4M17 206h4" stroke-width="1.200"/>
<path d="M26 231v12l-10-6z" stroke-width="1.200"/>
<circle cx="20" cy="266" r="4.500" stroke-width="1.200"/>
<rect x="15.500" y="290.500" width="9" height="9" stroke-width="1.200"/>
<path d="M15.500 325h2M19.500 325h2M23.500 325h2" stroke-width="2"/>
</svg>

<!-- webcam -->
<svg class="s" style="left:0;top:530px" width="335" height="190" viewBox="0 0 335 190">
<defs><linearGradient id="bg" x1="0" y1="0" x2="1" y2="1"><stop offset="0" stop-color="#fcc6fc"/><stop offset=".5" stop-color="#fdb6e6"/><stop offset="1" stop-color="#ff9eb8"/></linearGradient>
<filter id="bl"><feGaussianBlur stdDeviation="1"/></filter></defs>
<rect x="0" y="0" width="335" height="190" fill="#fff"/>
<rect x="1" y="2" width="333" height="188" fill="url(#bg)"/>
<g filter="url(#bl)">
<path d="M46 192L48 168 83 123 98 92 110 75 192 80 213 117 237 143 252 168 252 185 200 192z" fill="#4a60d8"/>
<path d="M62 192L62 162 85 130 100 96 113 79 190 84 211 121 236 147 243 170 200 192z" fill="#3d1d44"/>
<path d="M65 192Q70 172 80 163L130 133 185 133 233 157Q252 172 264 192z" fill="#a5a585"/>
<path d="M128 136L129 146 158 192 170 192 184 146 186 128z" fill="#f59a9c"/>
<path d="M130 143L158 190M184 143L170 190" stroke="#8a8a70" stroke-width="1.500" fill="none"/>
<ellipse cx="121" cy="97" rx="9" ry="13" fill="#ee8e96"/>
<path d="M128 60Q160 46 191 68L191 100Q187 124 172 134Q158 141 146 133Q132 120 129 100z" fill="#f6a2a6"/>
<path d="M130 102Q136 125 150 137Q160 141 172 136Q186 126 190 108Q184 104 176 107Q166 106 157 113Q148 118 140 112Q134 106 130 102z" fill="#a5606c" opacity=".85"/>
<path d="M157 114Q170 108 184 111Q172 118 157 114z" fill="#6e3040"/>
<path d="M113 82Q109 68 115 55Q130 35 158 31Q183 33 192 58L192 73Q185 64 172 62Q150 50 135 58Q131 72 130 90Q124 82 118 86z" fill="#3c1b47"/>
<path d="M144 77Q152 73 160 77M177 72Q184 69 190 71" stroke="#5c3048" stroke-width="2" fill="none"/>
<path d="M148 84Q155 81 162 85M180 81Q185 79 190 81" stroke="#6a3a4a" stroke-width="2" fill="none"/>
<path d="M172 84L168 100Q172 103 179 101" stroke="#d68088" stroke-width="1.500" fill="none"/>
</g>
</svg>

</div></body></html>
